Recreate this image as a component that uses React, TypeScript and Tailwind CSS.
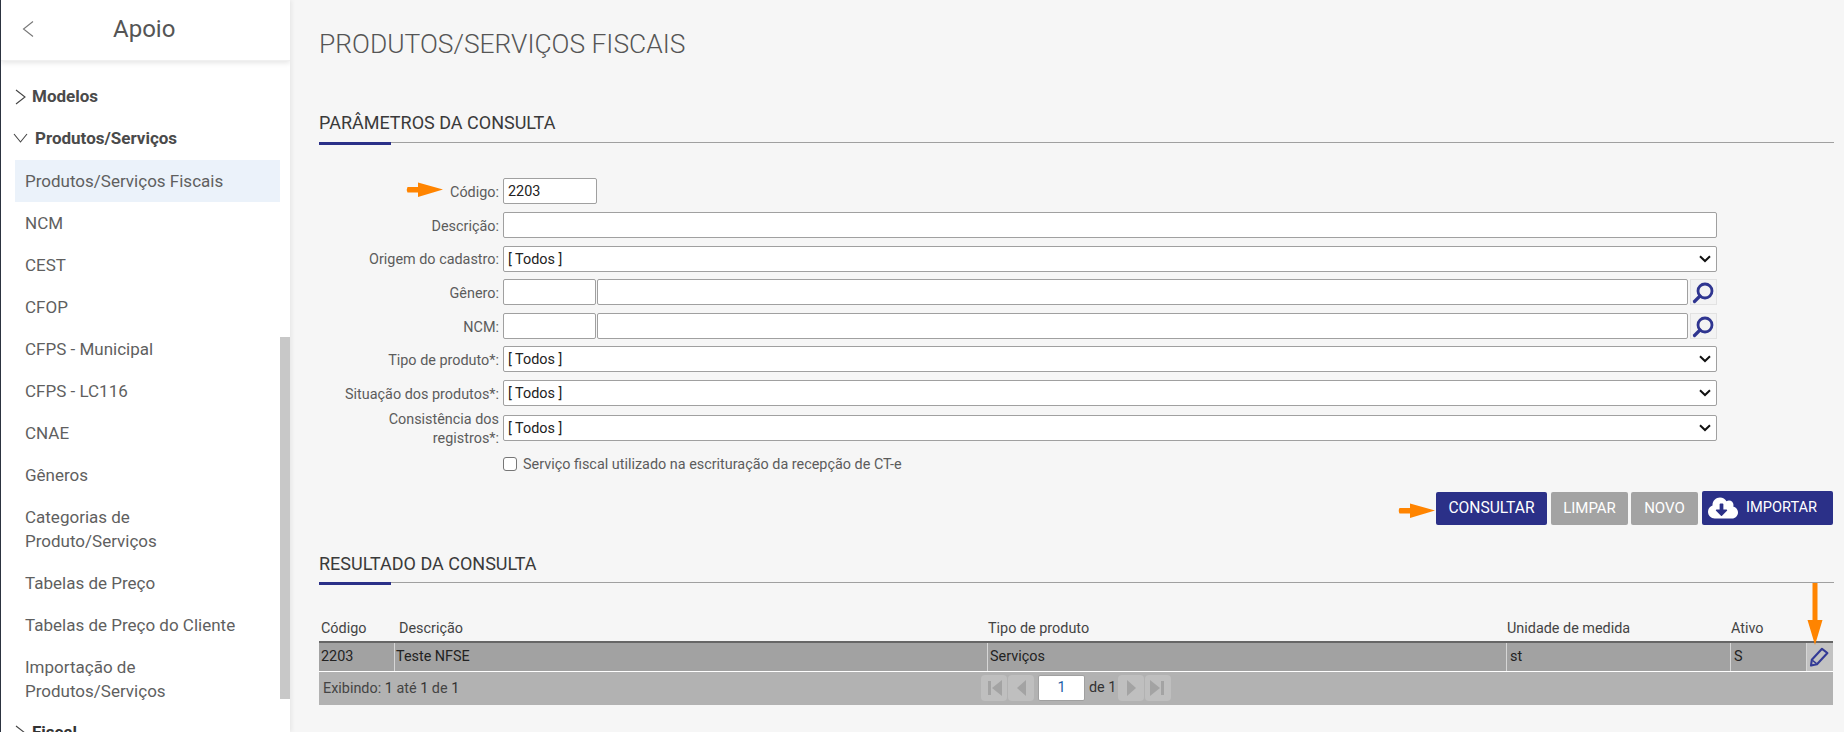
import React from "react";
import { FaCloudDownloadAlt } from "react-icons/fa";

const Chevron = ({ dir }: { dir: "left" | "right" | "down" }) => {
  if (dir === "left")
    return (
      <svg width="13" height="20" viewBox="0 0 13 20" fill="none" stroke="#777" strokeWidth="1.1">
        <path d="M11 2.5 L1.5 10 L11 17.5" />
      </svg>
    );
  if (dir === "right")
    return (
      <svg width="11" height="16" viewBox="0 0 11 16" fill="none" stroke="#444" strokeWidth="1.1">
        <path d="M1 1 L10 8 L1 15" />
      </svg>
    );
  return (
    <svg width="15" height="10" viewBox="0 0 15 10" fill="none" stroke="#444" strokeWidth="1.1">
      <path d="M1 1 L7.5 9 L14 1" />
    </svg>
  );
};

const SelectArrow = () => (
  <svg width="12" height="8" viewBox="0 0 12 8" fill="none" stroke="#111" strokeWidth="2" className="mr-[5px] shrink-0">
    <path d="M1 1.2 L6 6 L11 1.2" />
  </svg>
);

const SearchBtn = () => (
  <div className="ml-[2px] h-[26px] w-[27px] shrink-0 border border-[#e2e2e2] bg-[#f3f3f3]">
    <svg width="25" height="24" viewBox="1 1 25 24" fill="none" stroke="#2f3590" strokeWidth="2.8">
      <circle cx="15" cy="12" r="7" />
      <path d="M10 17 L4.5 22.5" strokeWidth="3.2" strokeLinecap="round" />
    </svg>
  </div>
);

const inputCls = "h-[26px] rounded-[2px] border border-[#a0a0a0] bg-white";

const Row = ({ label, mt, children }: { label: React.ReactNode; mt: string; children: React.ReactNode }) => (
  <div className={`flex items-center ${mt}`}>
    <div className="w-[180px] shrink-0 pt-[2px] text-right text-[14.4px] leading-[19px] text-[#5c5c5c]">{label}</div>
    <div className="ml-[4px] flex w-[1214px]">{children}</div>
  </div>
);

const SelectField = () => (
  <div className={`${inputCls} flex w-full items-center justify-between pl-[4px] text-[14.4px] text-[#222]`}>
    <span className="pt-[2px]">[ Todos ]</span>
    <SelectArrow />
  </div>
);

const SectionTitle = ({ text, height }: { text: string; height: string }) => (
  <div className={`relative border-b border-[#a0a0a0] ${height}`}>
    <div className="text-[18px] leading-[21px] text-[#3a3a3a]">{text}</div>
    <div className="absolute bottom-[-3px] left-0 h-[3px] w-[72px] bg-[#2b3088]" />
  </div>
);

const HArrow = ({ className }: { className: string }) => (
  <svg width="38" height="16" viewBox="0 0 38 16" className={className}>
    <path d="M1.5 5 H12 V0.5 L37 7.5 L12 15 V10.5 H1.5 Q0 7.7 1.5 5 Z" fill="#ff8400" />
  </svg>
);

const PagerBtn = ({ kind }: { kind: "first" | "prev" | "next" | "last" }) => {
  const paths = {
    first: "M4 3 H7 V17 H4 Z M18 2 V18 L8 10 Z",
    prev: "M15 2 V18 L6 10 Z",
    next: "M6 2 V18 L15 10 Z",
    last: "M16 3 H13 V17 H16 Z M2 2 V18 L12 10 Z",
  };
  return (
    <div className="flex h-[26px] w-[26px] items-center justify-center rounded-[4px] bg-[#bfbfbf]">
      <svg width="20" height="20" viewBox="0 0 20 20">
        <path d={paths[kind]} fill="#a3a3a3" />
      </svg>
    </div>
  );
};

const MenuItem = ({ children, active }: { children: React.ReactNode; active?: boolean }) => (
  <div className={`ml-[14px] w-[265px] py-[9px] pl-[10px] pr-[20px] text-[17px] leading-[24px] text-[#5f5f5f] ${active ? "bg-[#ebf2fa]" : ""}`}>
    {children}
  </div>
);

export default function App() {
  return (
    <div className="flex h-[732px] w-[1844px] overflow-hidden bg-[#f6f6f6] font-['Roboto',sans-serif]">
      {/* Sidebar */}
      <aside className="relative h-full w-[290px] shrink-0 overflow-hidden border-l-[1.5px] border-[#2c3340] bg-white shadow-[2px_0_4px_rgba(0,0,0,0.06)]">
        <div className="flex h-[61px] items-center border-b border-[#f0f0f0] pb-[3px] shadow-[0_2px_5px_rgba(0,0,0,0.1)]">
          <div className="ml-[21px]">
            <Chevron dir="left" />
          </div>
          <div className="ml-[78px] text-[24px] text-[#555]">Apoio</div>
        </div>
        <div className="mt-[23px] flex items-center pl-[14px] text-[17px] font-bold text-[#4a4a4a]">
          <Chevron dir="right" />
          <span className="ml-[6px]">Modelos</span>
        </div>
        <div className="mt-[16px] flex items-center pl-[12px] text-[17px] font-bold text-[#4a4a4a]">
          <Chevron dir="down" />
          <span className="ml-[7px]">Produtos/Serviços</span>
        </div>
        <div className="mt-[9px]">
          <MenuItem active>Produtos/Serviços Fiscais</MenuItem>
          <MenuItem>NCM</MenuItem>
          <MenuItem>CEST</MenuItem>
          <MenuItem>CFOP</MenuItem>
          <MenuItem>CFPS - Municipal</MenuItem>
          <MenuItem>CFPS - LC116</MenuItem>
          <MenuItem>CNAE</MenuItem>
          <MenuItem>Gêneros</MenuItem>
          <MenuItem>Categorias de Produto/Serviços</MenuItem>
          <MenuItem>Tabelas de Preço</MenuItem>
          <MenuItem>Tabelas de Preço do Cliente</MenuItem>
          <MenuItem>Importação de Produtos/Serviços</MenuItem>
        </div>
        <div className="mt-[8px] flex items-center pl-[14px] text-[17px] font-bold text-[#333]">
          <Chevron dir="right" />
          <span className="ml-[6px]">Fiscal</span>
        </div>
        {/* scrollbar */}
        <div className="absolute left-[279px] top-[337px] h-[362px] w-[10px] bg-[#c8c8c8]" />
      </aside>

      {/* Main */}
      <main className="ml-[29px] w-[1515px] shrink-0">
        <h1 className="mt-[30px] text-[26.4px] font-light leading-[28px] text-[#555]">PRODUTOS/SERVIÇOS FISCAIS</h1>

        <div className="mt-[54px]">
          <SectionTitle text="PARÂMETROS DA CONSULTA" height="h-[31px]" />
        </div>

        <div className="relative mt-[35px]">
          <HArrow className="absolute left-[87px] top-[4px]" />
          <Row label="Código:" mt="">
            <div className={`${inputCls} flex w-[94px] items-center pl-[4px] pt-[1px] text-[14.4px] text-[#222]`}>2203</div>
          </Row>
          <Row label="Descrição:" mt="mt-[8px]">
            <div className={`${inputCls} w-full`} />
          </Row>
          <Row label="Origem do cadastro:" mt="mt-[7.5px]">
            <SelectField />
          </Row>
          <Row label="Gênero:" mt="mt-[7.5px]">
            <div className={`${inputCls} w-[93px]`} />
            <div className={`${inputCls} ml-px w-[1091px]`} />
            <SearchBtn />
          </Row>
          <Row label="NCM:" mt="mt-[8px]">
            <div className={`${inputCls} w-[93px]`} />
            <div className={`${inputCls} ml-px w-[1091px]`} />
            <SearchBtn />
          </Row>
          <Row label="Tipo de produto*:" mt="mt-[7px]">
            <SelectField />
          </Row>
          <Row label="Situação dos produtos*:" mt="mt-[8px]">
            <SelectField />
          </Row>
          <Row label={<>Consistência dos<br />registros*:</>} mt="mt-[2px]">
            <SelectField />
          </Row>
          <div className="ml-[184px] mt-[8px] flex items-center">
            <div className="h-[14px] w-[14px] rounded-[3px] border border-[#767676] bg-white" />
            <span className="ml-[6px] pt-[2px] text-[14.4px] leading-[14px] text-[#5c5c5c]">
              Serviço fiscal utilizado na escrituração da recepção de CT-e
            </span>
          </div>
        </div>

        <div className="relative mt-[19px] flex h-[34px] w-[1514px] items-end justify-end text-[15px] text-white">
          <HArrow className="absolute left-[1079px] top-[12px]" />
          <div className="flex h-[33px] w-[111px] items-center justify-center rounded-[2px] bg-[#2b3088] text-[15.6px]">CONSULTAR</div>
          <div className="ml-[4px] flex h-[33px] w-[77px] items-center justify-center rounded-[2px] bg-[#a3a3a3]">LIMPAR</div>
          <div className="ml-[3px] flex h-[33px] w-[67px] items-center justify-center rounded-[2px] bg-[#a3a3a3]">NOVO</div>
          <div className="ml-[4px] flex h-[34px] w-[131px] items-center rounded-[2px] bg-[#2b3088] pl-[6px] text-[14.6px]">
            <FaCloudDownloadAlt className="text-[30px]" />
            <span className="ml-[8px]">IMPORTAR</span>
          </div>
        </div>

        <div className="mt-[28px]">
          <SectionTitle text="RESULTADO DA CONSULTA" height="h-[30px]" />
        </div>

        {/* Result grid */}
        <div className="relative mt-[37px] w-[1514px] text-[14.4px]">
          <svg width="16" height="62" viewBox="0 0 16 62" className="absolute left-[1488px] top-[-37px]">
            <path d="M5.5 0 H10.5 V37 H15.5 L8 62 L0.5 37 H5.5 Z" fill="#ff8400" />
          </svg>
          <div className="grid h-[21px] grid-cols-[76px_593px_519px_224px_76px_26px] items-start pt-[1px] leading-[15px] text-[#444]">
            <div className="pl-[2px]">Código</div>
            <div className="pl-[4px]">Descrição</div>
            <div>Tipo de produto</div>
            <div>Unidade de medida</div>
            <div>Ativo</div>
            <div />
          </div>
          <div className="grid h-[31px] grid-cols-[76px_593px_519px_224px_76px_26px] items-center border-t-2 border-b border-t-[#666] border-b-white bg-[#a2a2a2] text-[#222]">
            <div className="flex h-full items-center border-r border-[#d6d6d6] pl-[2px]">2203</div>
            <div className="flex h-full items-center border-r border-[#d6d6d6] pl-[1px]">Teste NFSE</div>
            <div className="flex h-full items-center border-r border-[#d6d6d6] pl-[2px]">Serviços</div>
            <div className="flex h-full items-center border-r border-[#d6d6d6] pl-[3px]">st</div>
            <div className="flex h-full items-center border-r border-[#d6d6d6] pl-[3px]">S</div>
            <div className="flex h-full items-center justify-center bg-[#c2c2c2] pr-[2px]">
              <svg width="20" height="20" viewBox="0 0 20 20" fill="none" stroke="#333a96" strokeWidth="2.1" strokeLinejoin="round">
                <path d="M13 1.8 L18.4 6 L8 17.2 L2 18.6 L2.8 12.8 Z" />
                <path d="M3.4 13.4 L7.6 16.6" strokeWidth="1.4" />
              </svg>
            </div>
          </div>
          <div className="relative flex h-[33px] items-center bg-[#b2b2b2] text-[#444]">
            <span className="ml-[4px]">
              Exibindo: <span className="text-[#333]">1</span> até <span className="text-[#333]">1</span> de <span className="text-[#333]">1</span>
            </span>
            <div className="absolute left-[662px] top-[3px] flex items-center">
              <PagerBtn kind="first" />
              <div className="ml-px"><PagerBtn kind="prev" /></div>
              <div className="ml-[4px] flex h-[26px] w-[47px] items-center justify-center rounded-[2px] border border-[#a0a0a0] bg-white text-[#1d5fa8]">1</div>
              <span className="ml-[4px] w-[29px] text-[#333]">de 1</span>
              <PagerBtn kind="next" />
              <div className="ml-px"><PagerBtn kind="last" /></div>
            </div>
          </div>
        </div>
      </main>
    </div>
  );
}
